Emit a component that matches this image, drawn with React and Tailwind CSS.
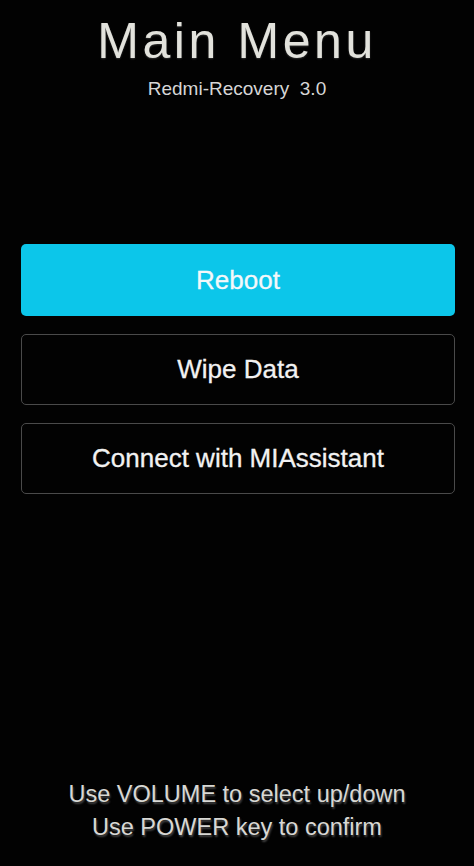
export default function App() {
  const font = { fontFamily: '"Liberation Sans", Arial, sans-serif' };
  return (
    <div className="w-[474px] h-[866px] bg-[#020202] flex flex-col items-center overflow-hidden" style={font}>
      <h1 className="mt-[16px] text-[50px] leading-[50px] tracking-[3.6px] text-[#e2e2dc] font-normal [text-shadow:0_1px_2px_rgba(120,120,120,0.4)]">
        Main Menu
      </h1>
      <div className="mt-[12px] text-[19px] leading-[22px] text-[#d6d6d6] whitespace-pre">
        Redmi-Recovery  3.0
      </div>
      <div className="mt-[144px] w-[434px] ml-[2px] flex flex-col gap-[18px]">
        <div className="h-[72px] rounded-[5px] bg-[#0cc6ea] flex items-center justify-center text-[26px] text-[#f4f8fa] [-webkit-text-stroke:0.3px_#f4f8fa]">
          Reboot
        </div>
        <div className="h-[71px] rounded-[5px] border border-[#4a4a4a] flex items-center justify-center text-[26px] text-[#f2f2f2] [-webkit-text-stroke:0.3px_#f2f2f2]">
          Wipe Data
        </div>
        <div className="h-[71px] rounded-[5px] border border-[#4a4a4a] flex items-center justify-center text-[26px] text-[#f2f2f2] [-webkit-text-stroke:0.3px_#f2f2f2]">
          Connect with MIAssistant
        </div>
      </div>
      <div className="mt-auto mb-[22px] flex flex-col items-center text-[23.5px] leading-[33px] text-[#d8d8d4] [text-shadow:1px_2px_2px_rgba(90,90,90,0.8)]">
        <div>Use VOLUME to select up/down</div>
        <div>Use POWER key to confirm</div>
      </div>
    </div>
  );
}
